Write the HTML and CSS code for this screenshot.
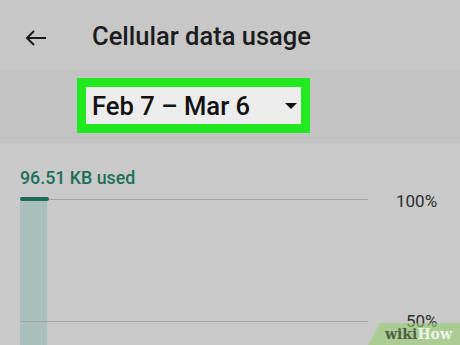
FILE: index.html
```html
<!DOCTYPE html>
<html>
<head>
<meta charset="utf-8">
<link rel="stylesheet" href="styles.css">
</head>
<body>
<div class="screen">
  <header class="topbar">
    <svg class="back" width="22" height="16" viewBox="0 0 22 16"><path d="M21 8H2M9 1L2 8l7 7" fill="none" stroke="#1a1a1a" stroke-width="2"/></svg>
    <h1 class="title">Cellular data usage</h1>
  </header>
  <div class="band">
    <div class="highlight">
      <div class="select">
        <span class="range">Feb 7 – Mar 6</span>
        <span class="caret"></span>
      </div>
    </div>
  </div>
  <main class="content">
    <div class="used">96.51 KB used</div>
    <div class="chart">
      <div class="bar"><div class="bar-top"></div></div>
      <div class="grid">
        <div class="row row-100"><div class="line"></div><span class="pct">100%</span></div>
        <div class="row row-50"><div class="line"></div><span class="pct">50%</span></div>
      </div>
    </div>
  </main>
  <div class="watermark"><span class="wiki">wiki</span><span class="how">How</span></div>
</div>
</body>
</html>
```
FILE: styles.css
```css
html, body { margin: 0; padding: 0; }
body { width: 460px; height: 345px; overflow: hidden; background: #c9c9c9; font-family: Roboto, "Noto Sans", sans-serif; }
.screen { position: relative; width: 460px; height: 345px; overflow: hidden; background: #c9c9c9; }
.topbar { height: 69px; background: #c7c7c7; display: flex; align-items: center; padding-left: 25px; box-sizing: border-box; }
.back { display: block; margin-top: 6px; }
.title { margin: 0 0 0 45px; font-size: 25.5px; font-weight: 500; color: #1c1c1c; line-height: 1; padding-top: 4px; }
.band { height: 74px; background: #c3c3c3; box-sizing: border-box; padding: 9px 0 0 77px; }
.highlight { width: 233px; height: 55px; box-sizing: border-box; border: 9px solid #22e81f; }
.select { height: 100%; background: #ececec; display: flex; align-items: center; padding-left: 6px; padding-right: 4px; box-sizing: border-box; }
.range { font-size: 25.6px; font-weight: 500; color: #111; flex: 1; line-height: 1; padding-top: 3px; }
.caret { width: 0; height: 0; border-left: 6px solid transparent; border-right: 6px solid transparent; border-top: 6px solid #111; }
.content { padding: 25px 0 0 20px; }
.used { font-size: 17.8px; font-weight: 500; color: #1d6f58; line-height: 20px; }
.chart { position: relative; margin-top: 9px; height: 160px; display: flex; }
.bar { width: 27px; height: 160px; background: #a9bfbb; flex: none; }
.bar-top { height: 4px; width: 29px; background: #1c6b55; border-radius: 2px; }
.grid { position: absolute; left: 0; top: 0; right: 0; }
.row { display: flex; align-items: center; height: 1px; }
.row-100 { margin-top: 2px; }
.row-50 { margin-top: 121px; }
.line { width: 348px; height: 1px; background: #a5a5a5; flex: none; }
.row-100 .line { margin-left: 29px; width: 319px; }
.pct { font-size: 17px; color: #2e2e2e; margin-left: 28px; line-height: 20px; padding-top: 2px; }
.row-50 .pct { margin-left: 38px; padding-top: 0; margin-top: -1px; }
.watermark { position: absolute; right: 0; bottom: 0; width: 92px; height: 22px; background: rgba(150, 205, 110, 0.6); clip-path: polygon(12px 0, 100% 0, 100% 100%, 0 100%); font-family: "DejaVu Serif", "Liberation Serif", serif; font-weight: bold; font-size: 14px; line-height: 22px; padding-left: 17px; box-sizing: border-box; }
.wiki { color: #4f5f4a; }
.how { color: #eef3ea; }
```
